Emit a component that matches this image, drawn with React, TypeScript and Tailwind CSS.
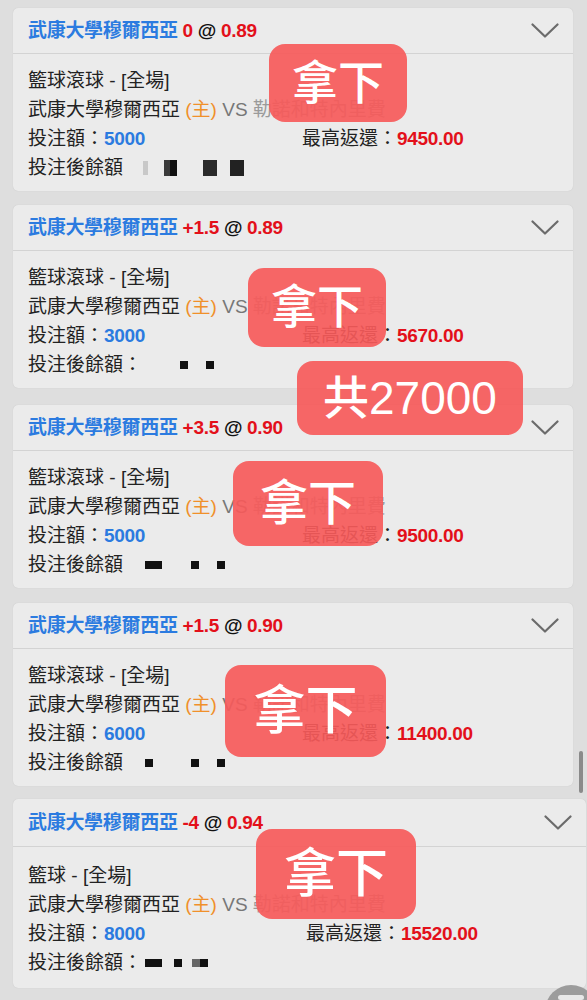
import React from "react";

type Block = { w: number; h: number; ml: number; tone: string };

type Bet = {
  handicap: string;
  odds: string;
  sport: string;
  stake: string;
  maxReturn: string;
  colon: boolean;
  blocks: Block[];
  wrap: string;
  head: string;
  body: string;
  col: string;
};

const bets: Bet[] = [
  {
    handicap: "0",
    odds: "0.89",
    sport: "籃球滾球 - [全場]",
    stake: "5000",
    maxReturn: "9450.00",
    colon: false,
    blocks: [
      { w: 5, h: 14, ml: 20, tone: "bg-[#c8c8c8]" },
      { w: 6, h: 16, ml: 16, tone: "bg-[#3a3a3a]" },
      { w: 7, h: 16, ml: 0, tone: "bg-[#111]" },
      { w: 14, h: 16, ml: 26, tone: "bg-[#2a2a2a]" },
      { w: 14, h: 16, ml: 13, tone: "bg-[#222]" },
    ],
    wrap: "mt-[8px] mr-[14px]",
    head: "h-[46px]",
    body: "pt-[12px] pb-[9px]",
    col: "w-[274px]",
  },
  {
    handicap: "+1.5",
    odds: "0.89",
    sport: "籃球滾球 - [全場]",
    stake: "3000",
    maxReturn: "5670.00",
    colon: true,
    blocks: [
      { w: 8, h: 8, ml: 57, tone: "bg-[#111]" },
      { w: 8, h: 8, ml: 18, tone: "bg-[#111]" },
    ],
    wrap: "mt-[14px] mr-[14px]",
    head: "h-[46px]",
    body: "pt-[12px] pb-[9px]",
    col: "w-[274px]",
  },
  {
    handicap: "+3.5",
    odds: "0.90",
    sport: "籃球滾球 - [全場]",
    stake: "5000",
    maxReturn: "9500.00",
    colon: false,
    blocks: [
      { w: 17, h: 8, ml: 22, tone: "bg-[#111]" },
      { w: 8, h: 8, ml: 29, tone: "bg-[#111]" },
      { w: 8, h: 8, ml: 18, tone: "bg-[#111]" },
    ],
    wrap: "mt-[17px] mr-[14px]",
    head: "h-[46px]",
    body: "pt-[12px] pb-[9px]",
    col: "w-[274px]",
  },
  {
    handicap: "+1.5",
    odds: "0.90",
    sport: "籃球滾球 - [全場]",
    stake: "6000",
    maxReturn: "11400.00",
    colon: false,
    blocks: [
      { w: 8, h: 8, ml: 22, tone: "bg-[#111]" },
      { w: 8, h: 8, ml: 38, tone: "bg-[#111]" },
      { w: 8, h: 8, ml: 18, tone: "bg-[#111]" },
    ],
    wrap: "mt-[15px] mr-[14px]",
    head: "h-[46px]",
    body: "pt-[12px] pb-[9px]",
    col: "w-[274px]",
  },
  {
    handicap: "-4",
    odds: "0.94",
    sport: "籃球 - [全場]",
    stake: "8000",
    maxReturn: "15520.00",
    colon: true,
    blocks: [
      { w: 17, h: 8, ml: 22, tone: "bg-[#111]" },
      { w: 8, h: 8, ml: 12, tone: "bg-[#111]" },
      { w: 8, h: 8, ml: 10, tone: "bg-[#666]" },
      { w: 8, h: 8, ml: 0, tone: "bg-[#111]" },
    ],
    wrap: "mt-[13px] mr-[1px]",
    head: "h-[48px]",
    body: "pt-[14px] pb-[11px]",
    col: "w-[278px]",
  },
];

function Chevron() {
  return (
    <svg width="28" height="16" viewBox="0 0 28 16" fill="none">
      <path d="M1.5 1.5 L14 13.5 L26.5 1.5" stroke="#6b6b6b" strokeWidth="2.2" strokeLinecap="round" strokeLinejoin="round" />
    </svg>
  );
}

function BetCard({ bet }: { bet: Bet }) {
  return (
    <div className={`ml-[13px] rounded-[5px] bg-[#ebebeb] shadow-[0_0_1px_rgba(0,0,0,0.15)] ${bet.wrap}`}>
      <div className={`flex items-center justify-between border-b border-[#d3d3d3] pl-[15px] pr-[14px] ${bet.head}`}>
        <div className="text-[19px] font-bold leading-none tracking-[-0.3px]">
          <span className="text-[#2b7be0]">武康大學穆爾西亞</span>
          <span className="text-[#e3101a]"> {bet.handicap}</span>
          <span className="text-[#111]"> @ </span>
          <span className="text-[#e3101a]">{bet.odds}</span>
        </div>
        <Chevron />
      </div>
      <div className={`pl-[15px] text-[19px] leading-[29px] text-[#222] ${bet.body}`}>
        <div>{bet.sport}</div>
        <div>
          武康大學穆爾西亞 <span className="text-[#f0902a]">(主)</span>{" "}
          <span className="text-[#777]">VS</span> <span className="text-[#9a9a9a]">勒諾和特內里費</span>
        </div>
        <div className="flex">
          <div className={bet.col}>
            投注額：<span className="font-bold text-[#2b7be0] tracking-[-0.3px]">{bet.stake}</span>
          </div>
          <div>
            最高返還：<span className="font-bold text-[#e3101a] tracking-[-0.3px]">{bet.maxReturn}</span>
          </div>
        </div>
        <div className="flex items-center">
          <span>{bet.colon ? "投注後餘額：" : "投注後餘額"}</span>
          <span className={`flex items-center ${bet.colon ? "-ml-[19px]" : ""}`}>
            {bet.blocks.map((b, i) => (
              <span
                key={i}
                className={`inline-block ${b.tone}`}
                style={{ width: b.w, height: b.h, marginLeft: b.ml }}
              />
            ))}
          </span>
        </div>
      </div>
    </div>
  );
}

function Stamp({ text, className }: { text: string; className: string }) {
  return (
    <div
      className={`absolute flex items-center justify-center rounded-[16px] bg-[#f65a5a]/[0.92] font-medium text-white ${className}`}
    >
      {text}
    </div>
  );
}

export default function App() {
  return (
    <div
      className="relative h-[1000px] w-[587px] overflow-hidden bg-[#dedede]"
      style={{ fontFamily: '"Liberation Sans", "Noto Sans CJK TC", sans-serif' }}
    >
      {bets.map((bet, i) => (
        <BetCard key={i} bet={bet} />
      ))}

      {/* stamps pasted over the cards */}
      <Stamp text="拿下" className="left-[269px] top-[44px] h-[78px] w-[138px] text-[46px]" />
      <Stamp text="拿下" className="left-[248px] top-[268px] h-[79px] w-[138px] text-[46px]" />
      <Stamp text="共27000" className="left-[297px] top-[361px] h-[74px] w-[226px] text-[46px]" />
      <Stamp text="拿下" className="left-[233px] top-[461px] h-[85px] w-[150px] text-[48px]" />
      <Stamp text="拿下" className="left-[225px] top-[665px] h-[92px] w-[161px] text-[52px]" />
      <Stamp text="拿下" className="left-[256px] top-[829px] h-[90px] w-[160px] text-[52px]" />

      <div className="absolute left-[579px] top-[751px] h-[42px] w-[4px] rounded-full bg-[#8a8a8a]" />
      <div className="absolute left-[545px] top-[985px] flex h-[52px] w-[52px] justify-center rounded-full bg-[#9c9c9c]">
        <div className="mt-[10px] h-[5px] w-[26px] rounded-full bg-[#e8e8e8]" />
      </div>
    </div>
  );
}
